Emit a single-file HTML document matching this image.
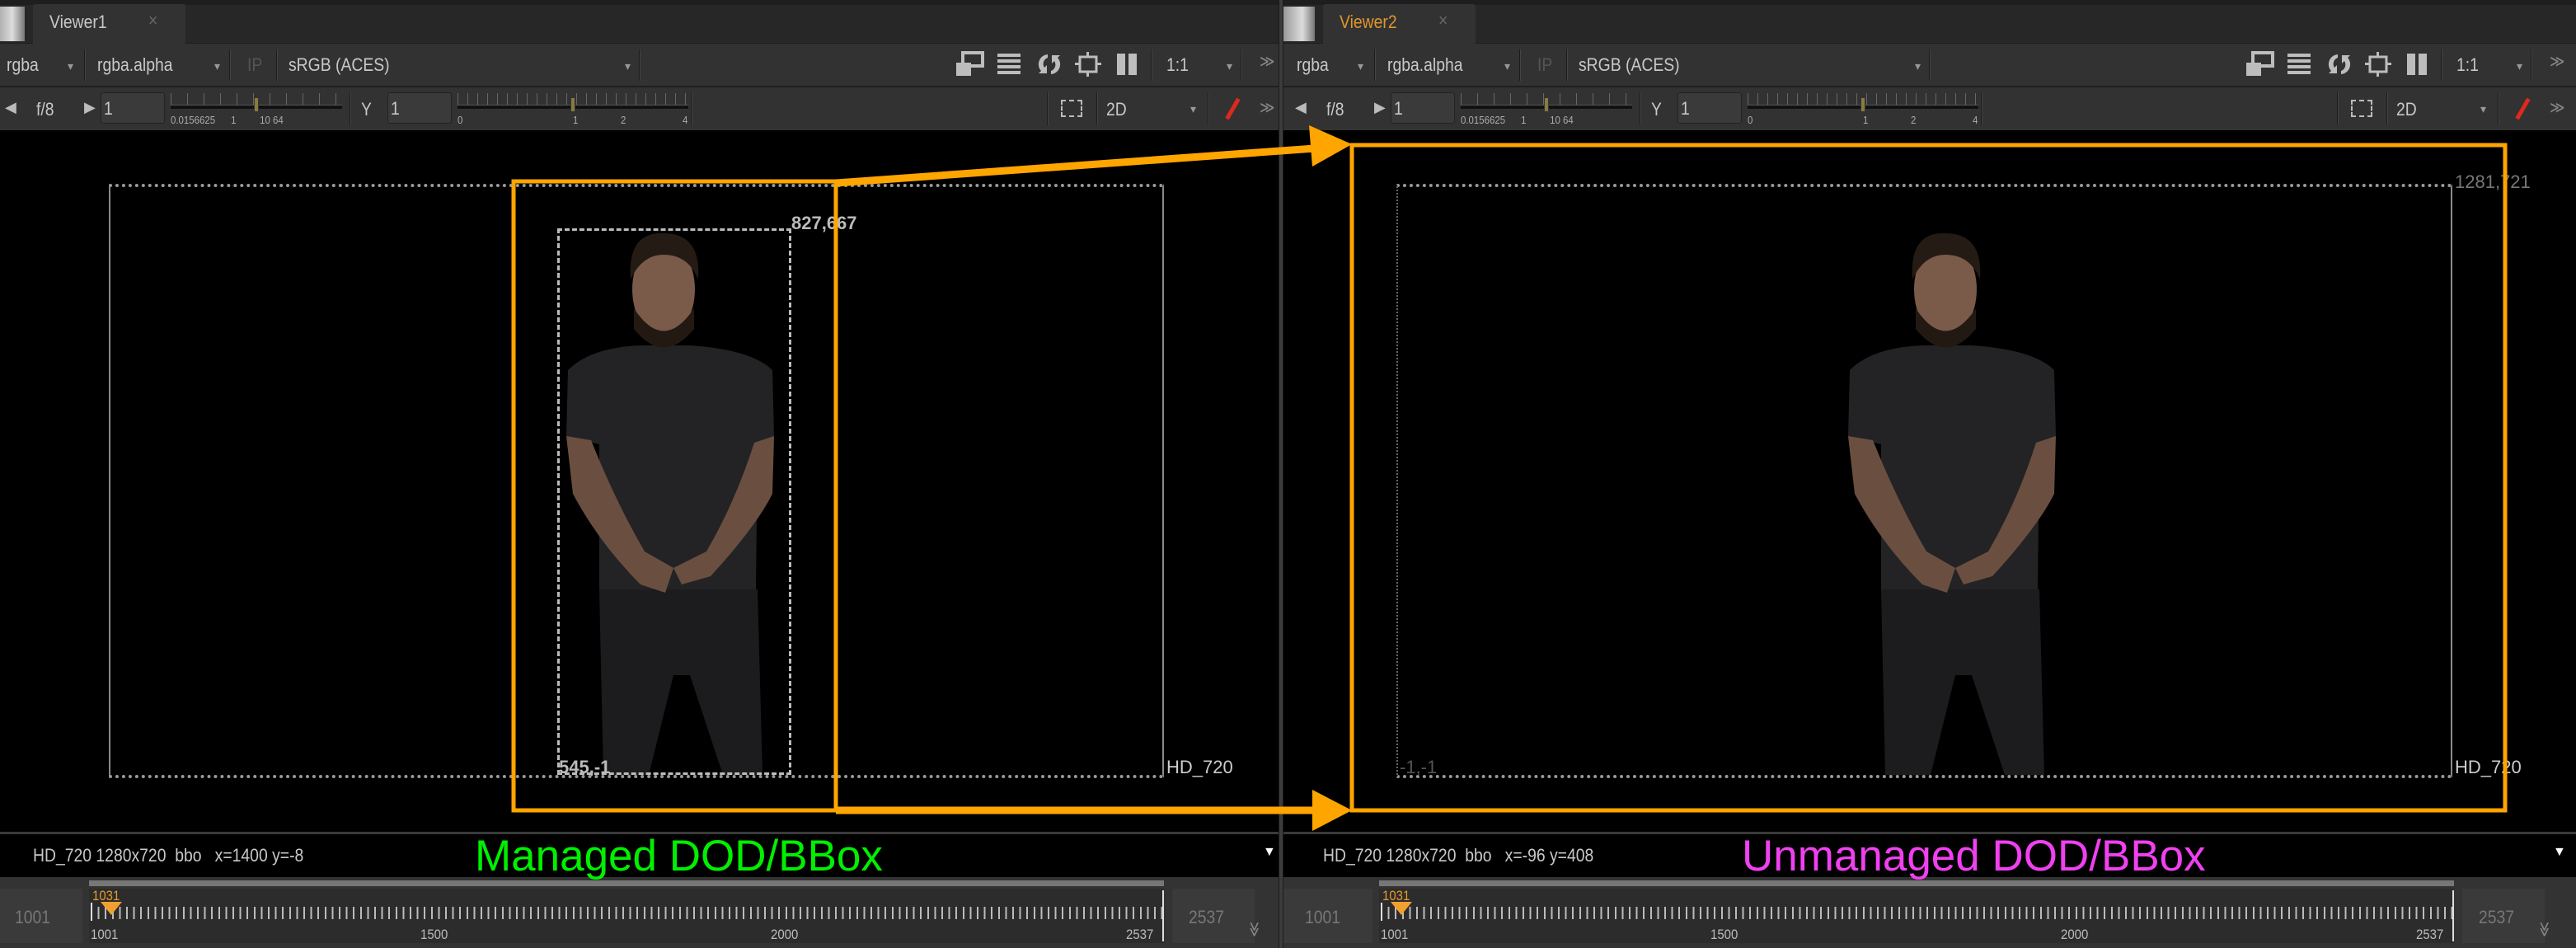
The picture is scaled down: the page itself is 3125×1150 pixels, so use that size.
<!DOCTYPE html>
<html><head><meta charset="utf-8">
<style>
*{margin:0;padding:0;box-sizing:border-box}
body{width:3125px;height:1150px;overflow:hidden;background:#2b2b2b;font-family:"Liberation Sans",sans-serif;position:relative}
.a{position:absolute}
.strip{position:absolute;left:0;width:3125px}
.p{position:absolute;top:0;width:1560px;height:1150px}
.t{position:absolute;color:#c8c8c8;font-size:22px;white-space:nowrap;transform:scaleX(.88);transform-origin:left top}
.sep{position:absolute;width:2px;background:#1c1c1c;border-right:1px solid #444}
.dd{position:absolute;color:#999;font-size:14px}
.inp{position:absolute;background:#3a3a3a;border:1px solid #222;border-radius:3px}
</style></head><body>
<div class="strip" style="top:0;height:6px;background:#1e1e1e"></div>
<div class="strip" style="top:6px;height:46px;background:#272727"></div>
<div class="strip" style="top:52px;height:52px;background:#323232;border-top:1px solid #1e1e1e"></div>
<div class="strip" style="top:104px;height:56px;background:#323232;border-top:2px solid #1e1e1e"></div>
<div class="strip" style="top:158px;height:852px;background:#000"></div>
<div class="strip" style="top:1009px;height:3px;background:#3a3a3a"></div>
<div class="strip" style="top:1012px;height:52px;background:#000"></div>
<div class="strip" style="top:1064px;height:86px;background:#333"></div>
<div class="a" style="left:1551px;top:0;width:6px;height:1150px;background:#3c3c3c;border-left:1px solid #1a1a1a;border-right:1px solid #1a1a1a"></div>

<div class="p" style="left:0">
 <div class="a" style="left:-8px;top:8px;width:38px;height:42px;background:linear-gradient(90deg,#999,#ddd 60%,#777)"></div>
 <div class="a" style="left:40px;top:5px;width:185px;height:48px;background:#323232;border-radius:3px 3px 0 0"></div>
 <div class="t" style="left:60px;top:14px;font-size:22px;color:#c8c8c8">Viewer1</div>
 <div class="t" style="left:180px;top:12px;color:#666;font-size:22px">×</div>
 <div class="t" style="left:8px;top:66px">rgba</div><div class="dd" style="left:82px;top:72px">▾</div><div class="sep" style="left:102px;top:60px;height:38px"></div>
 <div class="t" style="left:118px;top:66px">rgba.alpha</div><div class="dd" style="left:260px;top:72px">▾</div><div class="sep" style="left:278px;top:60px;height:38px"></div>
 <div class="t" style="left:300px;top:66px;color:#555">IP</div><div class="sep" style="left:335px;top:60px;height:38px"></div>
 <div class="t" style="left:350px;top:66px">sRGB (ACES)</div><div class="dd" style="left:758px;top:72px">▾</div><div class="sep" style="left:775px;top:60px;height:38px"></div>
 <svg class="a" style="left:1158px;top:62px" width="240" height="32" viewBox="0 0 240 32">
  <g fill="#bdbdbd"><rect x="10" y="2" width="24" height="16" fill="none" stroke="#bdbdbd" stroke-width="4"/><rect x="2" y="14" width="18" height="16"/>
  <rect x="52" y="3" width="28" height="4"/><rect x="52" y="10" width="28" height="4"/><rect x="52" y="17" width="28" height="4"/><rect x="52" y="24" width="28" height="4"/>
  <path d="M113 4a12 12 0 0 0-8 20l-3 3h10v-10l-3 3a8 8 0 0 1 4-12z M117 28a12 12 0 0 0 8-20l3-3h-10v10l3-3a8 8 0 0 1-4 12z"/>
  <rect x="152" y="7" width="20" height="18" fill="none" stroke="#bdbdbd" stroke-width="3"/><rect x="160" y="1" width="3" height="6"/><rect x="160" y="25" width="3" height="6"/><rect x="146" y="14" width="6" height="3"/><rect x="172" y="14" width="6" height="3"/>
  <rect x="197" y="3" width="10" height="26"/><rect x="211" y="3" width="10" height="26"/></g></svg>
 <div class="sep" style="left:1396px;top:60px;height:38px"></div>
 <div class="t" style="left:1415px;top:66px">1:1</div><div class="dd" style="left:1488px;top:72px">▾</div><div class="sep" style="left:1505px;top:60px;height:38px"></div>
 <div class="t" style="left:1528px;top:62px;color:#888;font-size:20px">≫</div>
 <div class="dd" style="left:6px;top:120px;font-size:18px;color:#bbb">◀</div>
 <div class="t" style="left:44px;top:120px">f/8</div>
 <div class="dd" style="left:102px;top:120px;font-size:18px;color:#bbb">▶</div>
 <div class="inp" style="left:122px;top:112px;width:78px;height:38px"></div><div class="t" style="left:126px;top:119px">1</div>
 <div class="a" style="left:207px;top:127px;width:208px;height:5px;background:#111;border-top:1px solid #555"></div>
 <div class="a" style="left:207px;top:113px;width:208px;height:14px;background:repeating-linear-gradient(90deg,#666 0 1px,transparent 1px 20px)"></div>
 <div class="a" style="left:308px;top:118px;width:6px;height:18px;background:#8a7a40;border:1px solid #333"></div>
 <div class="t" style="left:207px;top:138px;font-size:13px;color:#aaa">0.0156625&nbsp;&nbsp;&nbsp;&nbsp;&nbsp;&nbsp;1&nbsp;&nbsp;&nbsp;&nbsp;&nbsp;&nbsp;&nbsp;&nbsp;&nbsp;10&nbsp;64</div>
 <div class="sep" style="left:424px;top:112px;height:40px"></div>
 <div class="t" style="left:438px;top:120px">Y</div>
 <div class="inp" style="left:470px;top:112px;width:78px;height:38px"></div><div class="t" style="left:474px;top:119px">1</div>
 <div class="a" style="left:555px;top:127px;width:280px;height:5px;background:#111;border-top:1px solid #555"></div>
 <div class="a" style="left:555px;top:113px;width:280px;height:14px;background:repeating-linear-gradient(90deg,#666 0 1px,transparent 1px 12px)"></div>
 <div class="a" style="left:692px;top:118px;width:6px;height:18px;background:#8a7a40;border:1px solid #333"></div>
 <div class="t" style="left:555px;top:138px;font-size:13px;color:#aaa">0</div><div class="t" style="left:695px;top:138px;font-size:13px;color:#aaa">1</div><div class="t" style="left:753px;top:138px;font-size:13px;color:#aaa">2</div><div class="t" style="left:828px;top:138px;font-size:13px;color:#aaa">4</div>
 <div class="sep" style="left:838px;top:112px;height:40px"></div>
 <div class="sep" style="left:1270px;top:112px;height:40px"></div>
 <div class="a" style="left:1287px;top:121px;width:26px;height:21px;border:2px dashed #bbb"></div>
 <div class="sep" style="left:1330px;top:112px;height:40px"></div>
 <div class="t" style="left:1342px;top:120px;color:#c8c8c8">2D</div><div class="dd" style="left:1444px;top:124px">▾</div>
 <div class="sep" style="left:1465px;top:112px;height:40px"></div>
 <div class="a" style="left:1493px;top:118px;width:5px;height:28px;background:#e0281c;transform:rotate(30deg)"></div>
 <div class="t" style="left:1528px;top:118px;color:#888;font-size:20px">≫</div>
 <div class="t" style="left:40px;top:1025px;font-size:22px">HD_720 1280x720&nbsp;&nbsp;bbo&nbsp;&nbsp;&nbsp;x=1400 y=-8</div>
 <div class="a" style="left:1532px;top:1025px;color:#fff;font-size:16px">▼</div>
 <div class="a" style="left:108px;top:1068px;width:1304px;height:7px;background:#777"></div>
 <div class="a" style="left:0;top:1078px;width:100px;height:66px;background:#3a3a3a"></div>
 <div class="t" style="left:18px;top:1100px;color:#777;font-size:22px">1001</div>
 <div class="a" style="left:108px;top:1078px;width:1304px;height:66px;background:#2c2c2c"></div>
 <div class="a" style="left:110px;top:1100px;width:1300px;height:15px;background:repeating-linear-gradient(90deg,#bbb 0 2px,transparent 2px 8.6px)"></div>
 <div class="a" style="left:1410px;top:1080px;width:2px;height:62px;background:#ddd"></div>
 <div class="a" style="left:110px;top:1095px;width:2px;height:22px;background:#ddd"></div>
 <div class="t" style="left:112px;top:1077px;color:#e89a2a;font-size:17px">1031</div>
 <div class="a" style="left:122px;top:1094px;width:0;height:0;border-left:13px solid transparent;border-right:13px solid transparent;border-top:16px solid #f0a030"></div>
 <div class="t" style="left:110px;top:1124px;font-size:17px;color:#bbb">1001</div>
 <div class="t" style="left:510px;top:1124px;font-size:17px;color:#bbb">1500</div>
 <div class="t" style="left:935px;top:1124px;font-size:17px;color:#bbb">2000</div>
 <div class="t" style="left:1366px;top:1124px;font-size:17px;color:#bbb">2537</div>
 <div class="a" style="left:1422px;top:1078px;width:100px;height:66px;background:#3a3a3a"></div>
 <div class="t" style="left:1442px;top:1100px;color:#777;font-size:22px">2537</div>
 <div class="t" style="left:1532px;top:1118px;color:#888;font-size:18px;transform:rotate(90deg)">≫</div>
</div>

<div class="p" style="left:1565px">
 <div class="a" style="left:-8px;top:8px;width:38px;height:42px;background:linear-gradient(90deg,#999,#ddd 60%,#777)"></div>
 <div class="a" style="left:40px;top:5px;width:185px;height:48px;background:#323232;border-radius:3px 3px 0 0"></div>
 <div class="t" style="left:60px;top:14px;font-size:22px;color:#e0952c">Viewer2</div>
 <div class="t" style="left:180px;top:12px;color:#666;font-size:22px">×</div>
 <div class="t" style="left:8px;top:66px">rgba</div><div class="dd" style="left:82px;top:72px">▾</div><div class="sep" style="left:102px;top:60px;height:38px"></div>
 <div class="t" style="left:118px;top:66px">rgba.alpha</div><div class="dd" style="left:260px;top:72px">▾</div><div class="sep" style="left:278px;top:60px;height:38px"></div>
 <div class="t" style="left:300px;top:66px;color:#555">IP</div><div class="sep" style="left:335px;top:60px;height:38px"></div>
 <div class="t" style="left:350px;top:66px">sRGB (ACES)</div><div class="dd" style="left:758px;top:72px">▾</div><div class="sep" style="left:775px;top:60px;height:38px"></div>
 <svg class="a" style="left:1158px;top:62px" width="240" height="32" viewBox="0 0 240 32">
  <g fill="#bdbdbd"><rect x="10" y="2" width="24" height="16" fill="none" stroke="#bdbdbd" stroke-width="4"/><rect x="2" y="14" width="18" height="16"/>
  <rect x="52" y="3" width="28" height="4"/><rect x="52" y="10" width="28" height="4"/><rect x="52" y="17" width="28" height="4"/><rect x="52" y="24" width="28" height="4"/>
  <path d="M113 4a12 12 0 0 0-8 20l-3 3h10v-10l-3 3a8 8 0 0 1 4-12z M117 28a12 12 0 0 0 8-20l3-3h-10v10l3-3a8 8 0 0 1-4 12z"/>
  <rect x="152" y="7" width="20" height="18" fill="none" stroke="#bdbdbd" stroke-width="3"/><rect x="160" y="1" width="3" height="6"/><rect x="160" y="25" width="3" height="6"/><rect x="146" y="14" width="6" height="3"/><rect x="172" y="14" width="6" height="3"/>
  <rect x="197" y="3" width="10" height="26"/><rect x="211" y="3" width="10" height="26"/></g></svg>
 <div class="sep" style="left:1396px;top:60px;height:38px"></div>
 <div class="t" style="left:1415px;top:66px">1:1</div><div class="dd" style="left:1488px;top:72px">▾</div><div class="sep" style="left:1505px;top:60px;height:38px"></div>
 <div class="t" style="left:1528px;top:62px;color:#888;font-size:20px">≫</div>
 <div class="dd" style="left:6px;top:120px;font-size:18px;color:#bbb">◀</div>
 <div class="t" style="left:44px;top:120px">f/8</div>
 <div class="dd" style="left:102px;top:120px;font-size:18px;color:#bbb">▶</div>
 <div class="inp" style="left:122px;top:112px;width:78px;height:38px"></div><div class="t" style="left:126px;top:119px">1</div>
 <div class="a" style="left:207px;top:127px;width:208px;height:5px;background:#111;border-top:1px solid #555"></div>
 <div class="a" style="left:207px;top:113px;width:208px;height:14px;background:repeating-linear-gradient(90deg,#666 0 1px,transparent 1px 20px)"></div>
 <div class="a" style="left:308px;top:118px;width:6px;height:18px;background:#8a7a40;border:1px solid #333"></div>
 <div class="t" style="left:207px;top:138px;font-size:13px;color:#aaa">0.0156625&nbsp;&nbsp;&nbsp;&nbsp;&nbsp;&nbsp;1&nbsp;&nbsp;&nbsp;&nbsp;&nbsp;&nbsp;&nbsp;&nbsp;&nbsp;10&nbsp;64</div>
 <div class="sep" style="left:424px;top:112px;height:40px"></div>
 <div class="t" style="left:438px;top:120px">Y</div>
 <div class="inp" style="left:470px;top:112px;width:78px;height:38px"></div><div class="t" style="left:474px;top:119px">1</div>
 <div class="a" style="left:555px;top:127px;width:280px;height:5px;background:#111;border-top:1px solid #555"></div>
 <div class="a" style="left:555px;top:113px;width:280px;height:14px;background:repeating-linear-gradient(90deg,#666 0 1px,transparent 1px 12px)"></div>
 <div class="a" style="left:692px;top:118px;width:6px;height:18px;background:#8a7a40;border:1px solid #333"></div>
 <div class="t" style="left:555px;top:138px;font-size:13px;color:#aaa">0</div><div class="t" style="left:695px;top:138px;font-size:13px;color:#aaa">1</div><div class="t" style="left:753px;top:138px;font-size:13px;color:#aaa">2</div><div class="t" style="left:828px;top:138px;font-size:13px;color:#aaa">4</div>
 <div class="sep" style="left:838px;top:112px;height:40px"></div>
 <div class="sep" style="left:1270px;top:112px;height:40px"></div>
 <div class="a" style="left:1287px;top:121px;width:26px;height:21px;border:2px dashed #bbb"></div>
 <div class="sep" style="left:1330px;top:112px;height:40px"></div>
 <div class="t" style="left:1342px;top:120px;color:#c8c8c8">2D</div><div class="dd" style="left:1444px;top:124px">▾</div>
 <div class="sep" style="left:1465px;top:112px;height:40px"></div>
 <div class="a" style="left:1493px;top:118px;width:5px;height:28px;background:#e0281c;transform:rotate(30deg)"></div>
 <div class="t" style="left:1528px;top:118px;color:#888;font-size:20px">≫</div>
 <div class="t" style="left:40px;top:1025px;font-size:22px">HD_720 1280x720&nbsp;&nbsp;bbo&nbsp;&nbsp;&nbsp;x=-96 y=408</div>
 <div class="a" style="left:1532px;top:1025px;color:#fff;font-size:16px">▼</div>
 <div class="a" style="left:108px;top:1068px;width:1304px;height:7px;background:#777"></div>
 <div class="a" style="left:-8px;top:1078px;width:108px;height:66px;background:#3a3a3a"></div>
 <div class="t" style="left:18px;top:1100px;color:#777;font-size:22px">1001</div>
 <div class="a" style="left:108px;top:1078px;width:1304px;height:66px;background:#2c2c2c"></div>
 <div class="a" style="left:110px;top:1100px;width:1300px;height:15px;background:repeating-linear-gradient(90deg,#bbb 0 2px,transparent 2px 8.6px)"></div>
 <div class="a" style="left:1410px;top:1080px;width:2px;height:62px;background:#ddd"></div>
 <div class="a" style="left:110px;top:1095px;width:2px;height:22px;background:#ddd"></div>
 <div class="t" style="left:112px;top:1077px;color:#e89a2a;font-size:17px">1031</div>
 <div class="a" style="left:122px;top:1094px;width:0;height:0;border-left:13px solid transparent;border-right:13px solid transparent;border-top:16px solid #f0a030"></div>
 <div class="t" style="left:110px;top:1124px;font-size:17px;color:#bbb">1001</div>
 <div class="t" style="left:510px;top:1124px;font-size:17px;color:#bbb">1500</div>
 <div class="t" style="left:935px;top:1124px;font-size:17px;color:#bbb">2000</div>
 <div class="t" style="left:1366px;top:1124px;font-size:17px;color:#bbb">2537</div>
 <div class="a" style="left:1422px;top:1078px;width:100px;height:66px;background:#3a3a3a"></div>
 <div class="t" style="left:1442px;top:1100px;color:#777;font-size:22px">2537</div>
 <div class="t" style="left:1532px;top:1118px;color:#888;font-size:18px;transform:rotate(90deg)">≫</div>
</div>

<div class="a" style="left:132px;top:223px;width:1280px;height:721px;border:2px solid #8a8a8a;border-top:4px dotted #999;border-bottom:4px dotted #999"></div>
<div class="a" style="left:1694px;top:223px;width:1281px;height:721px;border:2px solid #8a8a8a;border-top:4px dotted #999;border-bottom:4px dotted #999;border-left:2px dotted #666"></div>
<div class="t" style="left:1415px;top:918px;font-size:22px;color:#ccc;transform:none">HD_720</div>
<div class="t" style="left:2978px;top:918px;font-size:22px;color:#ccc;transform:none">HD_720</div>
<div class="t" style="left:2978px;top:208px;font-size:22px;color:#777;transform:none">1281,721</div>
<div class="t" style="left:1698px;top:918px;font-size:22px;color:#555;transform:none">-1,-1</div>

<svg class="a" style="left:687px;top:279px" width="260" height="665" viewBox="0 0 260 665">
 <path d="M40 436 L232 436 L238 661 L190 661 L150 540 L130 540 L100 661 L45 661Z" fill="#1c1c1e"/>
 <path d="M2 170 Q30 142 92 140 L150 140 Q225 145 250 170 L252 250 L232 260 L230 436 L40 436 L40 260 L0 250Z" fill="#232325"/>
 <path d="M0 250 L30 255 Q60 330 95 390 L130 410 L120 440 L90 430 Q40 380 8 320Z" fill="#6a4f40"/>
 <path d="M252 250 L228 258 Q205 330 170 390 L130 410 L140 430 L175 420 Q230 360 250 320Z" fill="#6a4f40"/>
 <ellipse cx="118" cy="72" rx="38" ry="58" fill="#7a5a48"/>
 <path d="M78 60 Q74 2 118 4 Q164 4 160 60 Q148 30 118 30 Q92 30 78 60Z" fill="#241b15"/>
 <path d="M82 95 Q118 150 155 95 L155 120 Q118 165 82 120Z" fill="#221913"/>
</svg>
<svg class="a" style="left:2242px;top:279px" width="260" height="665" viewBox="0 0 260 665">
 <path d="M40 436 L232 436 L238 661 L190 661 L150 540 L130 540 L100 661 L45 661Z" fill="#1c1c1e"/>
 <path d="M2 170 Q30 142 92 140 L150 140 Q225 145 250 170 L252 250 L232 260 L230 436 L40 436 L40 260 L0 250Z" fill="#232325"/>
 <path d="M0 250 L30 255 Q60 330 95 390 L130 410 L120 440 L90 430 Q40 380 8 320Z" fill="#6a4f40"/>
 <path d="M252 250 L228 258 Q205 330 170 390 L130 410 L140 430 L175 420 Q230 360 250 320Z" fill="#6a4f40"/>
 <ellipse cx="118" cy="72" rx="38" ry="58" fill="#7a5a48"/>
 <path d="M78 60 Q74 2 118 4 Q164 4 160 60 Q148 30 118 30 Q92 30 78 60Z" fill="#241b15"/>
 <path d="M82 95 Q118 150 155 95 L155 120 Q118 165 82 120Z" fill="#221913"/>
</svg>

<div class="a" style="left:676px;top:277px;width:284px;height:663px;border:3px dashed #bbb"></div>
<div class="t" style="left:960px;top:258px;font-size:22px;color:#bbb;font-weight:bold;transform:none">827,667</div>
<div class="t" style="left:678px;top:918px;font-size:22px;color:#bbb;font-weight:bold;transform:none">545,-1</div>

<svg class="a" style="left:0;top:0" width="3125" height="1150">
 <g fill="none" stroke="#ffa500" stroke-width="5">
  <rect x="623" y="220" width="391" height="763"/>
  <rect x="1640" y="176" width="1399" height="807"/>
 </g>
 <g stroke="#ffa500" stroke-width="9">
  <line x1="1014" y1="222" x2="1595" y2="180"/>
  <line x1="1014" y1="983" x2="1595" y2="983"/>
 </g>
 <g fill="#ffa500">
  <polygon points="1640,175 1588,152 1592,202"/>
  <polygon points="1640,983 1592,958 1592,1008"/>
 </g>
</svg>

<div class="a" style="left:576px;top:1008px;font-size:53px;color:#00f000;white-space:nowrap">Managed DOD/BBox</div>
<div class="a" style="left:2113px;top:1008px;font-size:53px;color:#f040f0;white-space:nowrap">Unmanaged DOD/BBox</div>
</body></html>
